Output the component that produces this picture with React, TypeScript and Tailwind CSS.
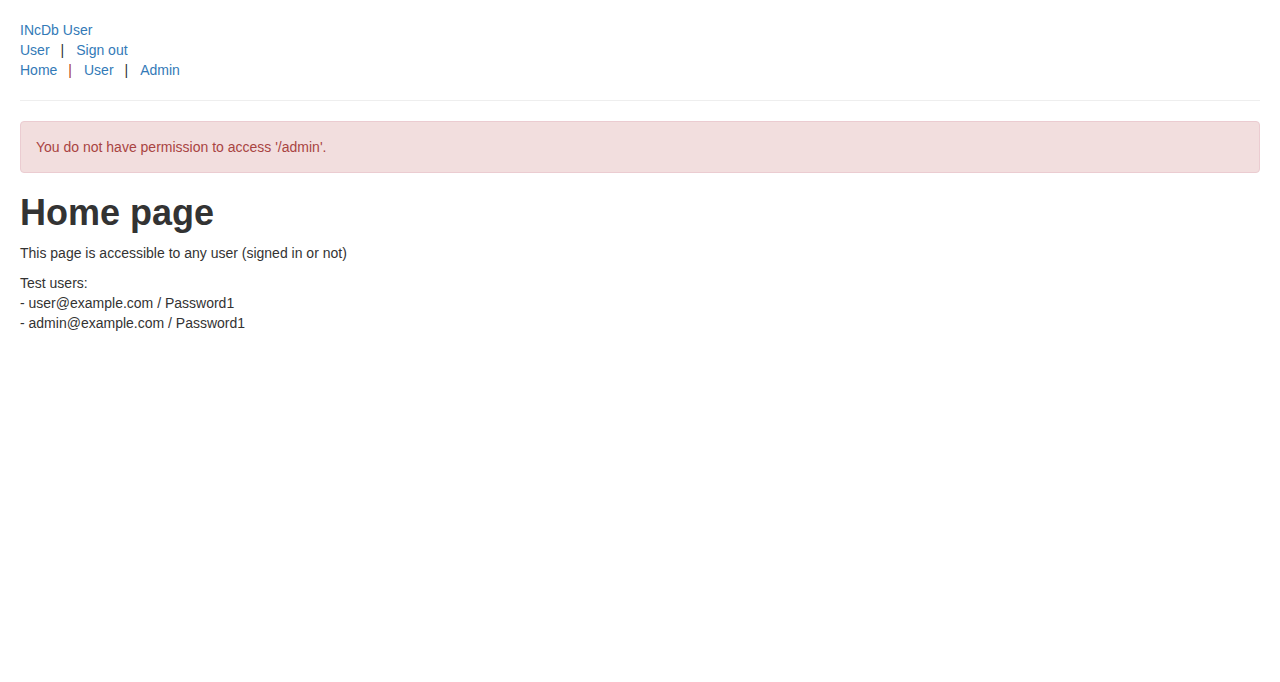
import React from "react";

const Pipe = ({ red }: { red?: boolean }) => (
  <span className={`ml-[11px] mr-[12px] ${red ? "text-[#a5392b]" : "text-[#333333]"}`}>|</span>
);

export default function App() {
  return (
    <div
      className="min-h-screen bg-white px-5 text-[14px] leading-[20px] text-[#333333]"
      style={{ fontFamily: '"Liberation Sans", Arial, sans-serif' }}
    >
      <div className="pt-5">
        <div>
          <a className="text-[#337ab7]" href="#">INcDb User</a>
        </div>
        <div>
          <a className="text-[#337ab7]" href="#">User</a>
          <Pipe />
          <a className="text-[#337ab7]" href="#">Sign out</a>
        </div>
        <div>
          <a className="text-[#337ab7]" href="#">Home</a>
          <Pipe red />
          <a className="text-[#337ab7]" href="#">User</a>
          <Pipe />
          <a className="text-[#337ab7]" href="#">Admin</a>
        </div>
      </div>
      <hr className="mt-5 mb-5 border-0 border-t border-[#eeeeee]" />
      <div className="mb-5 rounded-[4px] border border-[#ebccd1] bg-[#f2dede] p-[15px] text-[#a94442]">
        You do not have permission to access '/admin'.
      </div>
      <h1 className="mt-5 mb-[10px] text-[36px] font-bold leading-[1.1] text-[#333333]">Home page</h1>
      <p className="mb-[10px]">This page is accessible to any user (signed in or not)</p>
      <p className="mb-[10px]">
        Test users:
        <br />- user@example.com / Password1
        <br />- admin@example.com / Password1
      </p>
    </div>
  );
}
